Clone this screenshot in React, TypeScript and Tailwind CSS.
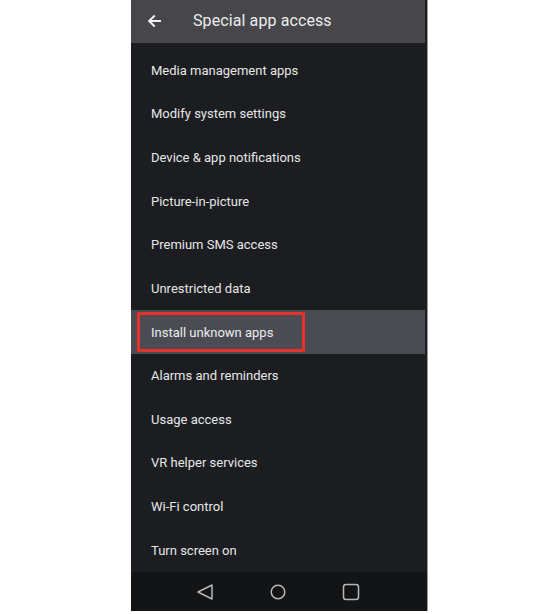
const items = [
  "Media management apps",
  "Modify system settings",
  "Device & app notifications",
  "Picture-in-picture",
  "Premium SMS access",
  "Unrestricted data",
  "Install unknown apps",
  "Alarms and reminders",
  "Usage access",
  "VR helper services",
  "Wi-Fi control",
  "Turn screen on",
]

export default function App() {
  return (
    <div className="w-[552px] h-[614px] bg-white flex font-['Roboto',sans-serif]">
      <div className="ml-[131px] w-[297px] h-[611px] bg-[#1c1d21] border-r border-[#9a9a9c] flex flex-col">
        <header className="h-[43px] w-[294px] bg-[#47474b] flex items-center">
          <svg width="14" height="14" viewBox="0 0 14 14" className="ml-[16px]" fill="none" stroke="#f2f2f2" strokeWidth="2" strokeLinecap="square">
            <path d="M13 7H2.5M7 2.2L2.2 7l4.8 4.8" />
          </svg>
          <span className="ml-[32px] text-[16px] text-[#ececec] tracking-[0.1px]">Special app access</span>
        </header>
        <ul className="flex-1 pt-[6px] w-[294px]">
          {items.map((t) =>
            t === "Install unknown apps" ? (
              <li key={t} className="h-[43.65px] bg-[#4b4c53] flex items-center px-[6px]">
                <div className="h-[40px] w-[168px] border-[3px] border-[#e8312a] flex items-center pl-[11px] text-[13px] text-[#ececec]">
                  {t}
                </div>
              </li>
            ) : (
              <li key={t} className="h-[43.65px] flex items-center pl-[20px] text-[13px] text-[#e6e6e6]">
                {t}
              </li>
            )
          )}
        </ul>
        <nav className="h-[39px] bg-[#131416] flex items-center pl-[65px] gap-[55px]">
          <svg width="18" height="18" viewBox="0 0 18 18" fill="none" stroke="#b8b8b8" strokeWidth="1.5" strokeLinejoin="round">
            <path d="M16 2v14L2 9z" />
          </svg>
          <svg width="18" height="18" viewBox="0 0 18 18" fill="none" stroke="#b8b8b8" strokeWidth="1.5">
            <circle cx="9" cy="9" r="6.8" />
          </svg>
          <svg width="18" height="18" viewBox="0 0 18 18" fill="none" stroke="#b8b8b8" strokeWidth="1.5">
            <rect x="1.5" y="1.5" width="15" height="15" rx="2.5" />
          </svg>
        </nav>
      </div>
    </div>
  )
}
